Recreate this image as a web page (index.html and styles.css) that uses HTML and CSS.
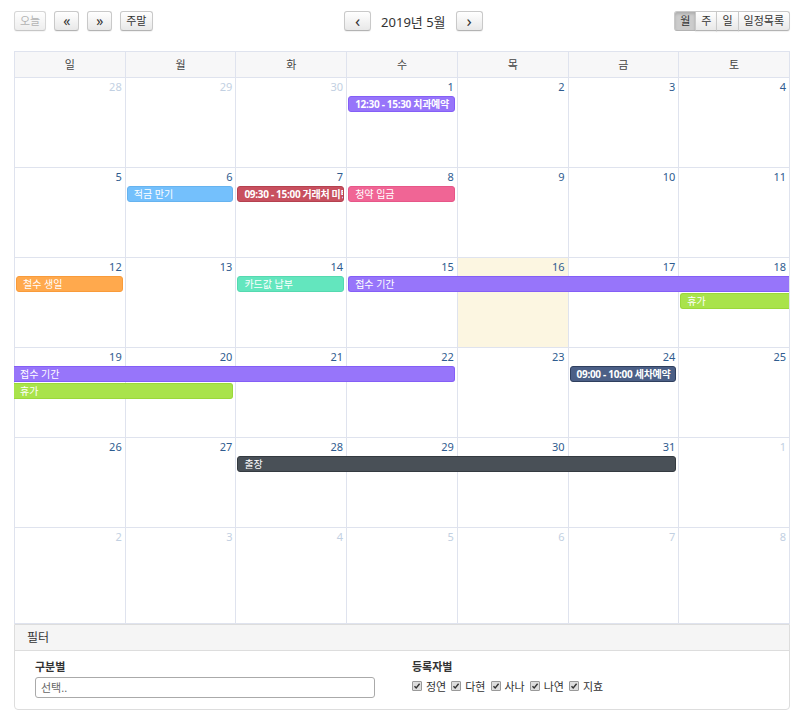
FILE: index.html
```html
<!DOCTYPE html>
<html>
  <head>
    <meta charset="utf-8">
    <link rel="stylesheet" href="styles.css">
  </head>
  <body>
    <div class="toolbar">
      <div class="tb-left">
        <button class="btn disabled">오늘</button>
        <button class="btn dbl">&laquo;</button>
        <button class="btn dbl">&raquo;</button>
        <button class="btn">주말</button>
      </div>
      <div class="tb-center">
        <button class="btn arrow">&lsaquo;</button>
        <h2 class="title">2019년 5월</h2>
        <button class="btn arrow">&rsaquo;</button>
      </div>
      <div class="btn-group">
        <button class="btn active">월</button>
        <button class="btn">주</button>
        <button class="btn">일</button>
        <button class="btn">일정목록</button>
      </div>
    </div>

    <div class="calendar">
      <div class="head">
        <div>일</div><div>월</div><div>화</div><div>수</div><div>목</div><div>금</div><div>토</div>
      </div>

      <div class="week">
        <div class="bg c1"></div><div class="bg c2"></div><div class="bg c3"></div><div class="bg c4"></div><div class="bg c5"></div><div class="bg c6"></div><div class="bg c7"></div>
        <div class="num c1 other">28</div><div class="num c2 other">29</div><div class="num c3 other">30</div><div class="num c4">1</div><div class="num c5">2</div><div class="num c6">3</div><div class="num c7">4</div>
        <div class="ev r2 purple bold" style="grid-column: 4 / 5">12:30 - 15:30 치과예약</div>
      </div>

      <div class="week">
        <div class="bg c1"></div><div class="bg c2"></div><div class="bg c3"></div><div class="bg c4"></div><div class="bg c5"></div><div class="bg c6"></div><div class="bg c7"></div>
        <div class="num c1">5</div><div class="num c2">6</div><div class="num c3">7</div><div class="num c4">8</div><div class="num c5">9</div><div class="num c6">10</div><div class="num c7">11</div>
        <div class="ev r2 sky" style="grid-column: 2 / 3">적금 만기</div>
        <div class="ev r2 red bold" style="grid-column: 3 / 4">09:30 - 15:00 거래처 미팅</div>
        <div class="ev r2 pink" style="grid-column: 4 / 5">청약 입금</div>
      </div>

      <div class="week">
        <div class="bg c1"></div><div class="bg c2"></div><div class="bg c3"></div><div class="bg c4"></div><div class="bg c5 today"></div><div class="bg c6"></div><div class="bg c7"></div>
        <div class="num c1">12</div><div class="num c2">13</div><div class="num c3">14</div><div class="num c4">15</div><div class="num c5">16</div><div class="num c6">17</div><div class="num c7">18</div>
        <div class="ev r2 orange" style="grid-column: 1 / 2">철수 생일</div>
        <div class="ev r2 mint" style="grid-column: 3 / 4">카드값 납부</div>
        <div class="ev r2 purple open-end" style="grid-column: 4 / 8">접수 기간</div>
        <div class="ev r3 green open-end" style="grid-column: 7 / 8">휴가</div>
      </div>

      <div class="week">
        <div class="bg c1"></div><div class="bg c2"></div><div class="bg c3"></div><div class="bg c4"></div><div class="bg c5"></div><div class="bg c6"></div><div class="bg c7"></div>
        <div class="num c1">19</div><div class="num c2">20</div><div class="num c3">21</div><div class="num c4">22</div><div class="num c5">23</div><div class="num c6">24</div><div class="num c7">25</div>
        <div class="ev r2 purple open-start" style="grid-column: 1 / 5">접수 기간</div>
        <div class="ev r2 navy bold" style="grid-column: 6 / 7">09:00 - 10:00 세차예약</div>
        <div class="ev r3 green open-start" style="grid-column: 1 / 3">휴가</div>
      </div>

      <div class="week">
        <div class="bg c1"></div><div class="bg c2"></div><div class="bg c3"></div><div class="bg c4"></div><div class="bg c5"></div><div class="bg c6"></div><div class="bg c7"></div>
        <div class="num c1">26</div><div class="num c2">27</div><div class="num c3">28</div><div class="num c4">29</div><div class="num c5">30</div><div class="num c6">31</div><div class="num c7 other">1</div>
        <div class="ev r2 dark" style="grid-column: 3 / 7">출장</div>
      </div>

      <div class="week last">
        <div class="bg c1"></div><div class="bg c2"></div><div class="bg c3"></div><div class="bg c4"></div><div class="bg c5"></div><div class="bg c6"></div><div class="bg c7"></div>
        <div class="num c1 other">2</div><div class="num c2 other">3</div><div class="num c3 other">4</div><div class="num c4 other">5</div><div class="num c5 other">6</div><div class="num c6 other">7</div><div class="num c7 other">8</div>
      </div>
    </div>

    <div class="filter">
      <div class="filter-head">필터</div>
      <div class="filter-body">
        <div class="field">
          <label>구분별</label>
          <input type="text" placeholder="선택..">
        </div>
        <div class="field">
          <label>등록자별</label>
          <div class="checks">
            <span class="check"><span class="box"><svg viewBox="0 0 8 8"><path d="M1.5 4.2 L3.2 6 L6.6 1.8" fill="none" stroke="#333" stroke-width="1.4"/></svg></span>정연</span>
            <span class="check"><span class="box"><svg viewBox="0 0 8 8"><path d="M1.5 4.2 L3.2 6 L6.6 1.8" fill="none" stroke="#333" stroke-width="1.4"/></svg></span>다현</span>
            <span class="check"><span class="box"><svg viewBox="0 0 8 8"><path d="M1.5 4.2 L3.2 6 L6.6 1.8" fill="none" stroke="#333" stroke-width="1.4"/></svg></span>사나</span>
            <span class="check"><span class="box"><svg viewBox="0 0 8 8"><path d="M1.5 4.2 L3.2 6 L6.6 1.8" fill="none" stroke="#333" stroke-width="1.4"/></svg></span>나연</span>
            <span class="check"><span class="box"><svg viewBox="0 0 8 8"><path d="M1.5 4.2 L3.2 6 L6.6 1.8" fill="none" stroke="#333" stroke-width="1.4"/></svg></span>지효</span>
          </div>
        </div>
      </div>
    </div>
  </body>
</html>
```

FILE: styles.css
```css
body {
  margin: 0;
  padding: 11px 10px 0 14px;
  font-family: "Noto Sans", "Noto Sans CJK KR", sans-serif;
  font-size: 12px;
  color: #333;
  background: #fff;
}

/* toolbar */
.toolbar {
  display: flex;
  align-items: center;
  height: 20px;
  margin-bottom: 20px;
}

.tb-left {
  display: flex;
  gap: 8px;
}

.tb-center {
  flex: 1;
  display: flex;
  justify-content: center;
  align-items: center;
}

.btn {
  height: 20px;
  padding: 0 5px;
  border: 1px solid #c9c9c9;
  border-bottom-color: #b3b3b3;
  border-radius: 3px;
  background: linear-gradient(#ffffff, #e8e8e8);
  box-shadow: 0 1px 1px rgba(0, 0, 0, 0.06);
  font-family: inherit;
  font-size: 11px;
  line-height: 18px;
  color: #333;
  cursor: pointer;
}

.btn.dbl {
  width: 25px;
  padding: 0;
  font-size: 14px;
  line-height: 16px;
}

.btn.disabled {
  color: #999;
  opacity: 0.75;
}

.btn.arrow {
  width: 27px;
  font-size: 17px;
  line-height: 16px;
  padding: 0;
}

.title {
  margin: 0 10px;
  font-size: 13px;
  font-weight: normal;
  color: #333;
}

.btn-group {
  display: flex;
}

.btn-group .btn {
  border-radius: 0;
  margin-left: -1px;
  padding: 0 5px;
}

.btn-group .btn:first-child {
  border-radius: 3px 0 0 3px;
  margin-left: 0;
}

.btn-group .btn:last-child {
  border-radius: 0 3px 3px 0;
}

.btn.active {
  background: #ccc;
  box-shadow: inset 0 2px 3px rgba(0, 0, 0, 0.15);
}

/* calendar */
.calendar {
  border: 1px solid #dfe3ee;
  border-left: none;
}

.head {
  display: grid;
  grid-template-columns: repeat(7, 1fr);
  height: 25px;
  background: #f7f7f8;
  border-bottom: 1px solid #dfe3ee;
}

.head div {
  border-left: 1px solid #dfe3ee;
  text-align: center;
  line-height: 25px;
  font-size: 11px;
  color: #444;
}

.week {
  display: grid;
  grid-template-columns: repeat(7, 1fr);
  grid-template-rows: 18px 17px 17px 1fr;
  height: 89px;
  border-bottom: 1px solid #dfe3ee;
}

.week.last {
  height: 95px;
  border-bottom: none;
}

.bg {
  grid-row: 1 / -1;
  border-left: 1px solid #dfe3ee;
}

.bg.today {
  background: #fcf6e1;
}

.c1 { grid-column: 1; }
.c2 { grid-column: 2; }
.c3 { grid-column: 3; }
.c4 { grid-column: 4; }
.c5 { grid-column: 5; }
.c6 { grid-column: 6; }
.c7 { grid-column: 7; }

.num {
  grid-row: 1;
  text-align: right;
  padding: 2px 3px 0 0;
  font-size: 11px;
  line-height: 14px;
  color: #2f5c8f;
}

.num.other {
  color: #c2d0e2;
}

.ev {
  margin: 0 2px 1px 2px;
  padding: 0 6px;
  border: 1px solid;
  border-radius: 3px;
  font-size: 10px;
  line-height: 14px;
  color: #fff;
  white-space: nowrap;
  overflow: hidden;
}

.r2 { grid-row: 2; }
.r3 { grid-row: 3; }

.ev.bold {
  font-weight: bold;
  font-size: 10px;
  letter-spacing: -0.3px;
}

.ev.open-end {
  margin-right: 0;
  border-right: none;
  border-radius: 3px 0 0 3px;
}

.ev.open-start {
  margin-left: 0;
  border-left: none;
  border-radius: 0 3px 3px 0;
}

.purple { background: #9775fa; border-color: #845ef7; }
.sky { background: #74c0fc; border-color: #66b3ef; }
.red { background: #c8505f; border-color: #b5404f; }
.pink { background: #f06595; border-color: #e75688; }
.orange { background: #ffa94d; border-color: #f99b3a; }
.mint { background: #63e6be; border-color: #55d9b0; }
.green { background: #a9e34b; border-color: #9ad83a; }
.navy { background: #4b5f86; border-color: #2f3f5e; }
.dark { background: #495057; border-color: #343a40; }

/* filter */
.filter {
  border: 1px solid #dddddd;
  border-radius: 0 0 4px 4px;
}

.filter-head {
  height: 25px;
  line-height: 25px;
  padding-left: 12px;
  background: #f5f5f5;
  border-bottom: 1px solid #dddddd;
  font-size: 12px;
}

.filter-body {
  display: grid;
  grid-template-columns: 340px 1fr;
  column-gap: 37px;
  padding: 9px 20px 11px 20px;
}

.field label {
  display: block;
  font-size: 11px;
  font-weight: bold;
  line-height: 14px;
  margin-bottom: 3px;
}

.field input {
  box-sizing: border-box;
  width: 340px;
  height: 21px;
  padding: 0 5px;
  border: 1px solid #aaa;
  border-radius: 3px;
  font-family: inherit;
  font-size: 11px;
}

.field input::placeholder {
  color: #666;
}

.checks {
  display: flex;
  gap: 5px;
  padding-top: 1px;
  font-size: 11px;
}

.check {
  display: flex;
  align-items: center;
  gap: 4px;
}

.box {
  width: 8px;
  height: 8px;
  border: 1px solid #999;
  border-radius: 1px;
  background: #ddd;
  display: flex;
}

.box svg {
  width: 8px;
  height: 8px;
}
```
